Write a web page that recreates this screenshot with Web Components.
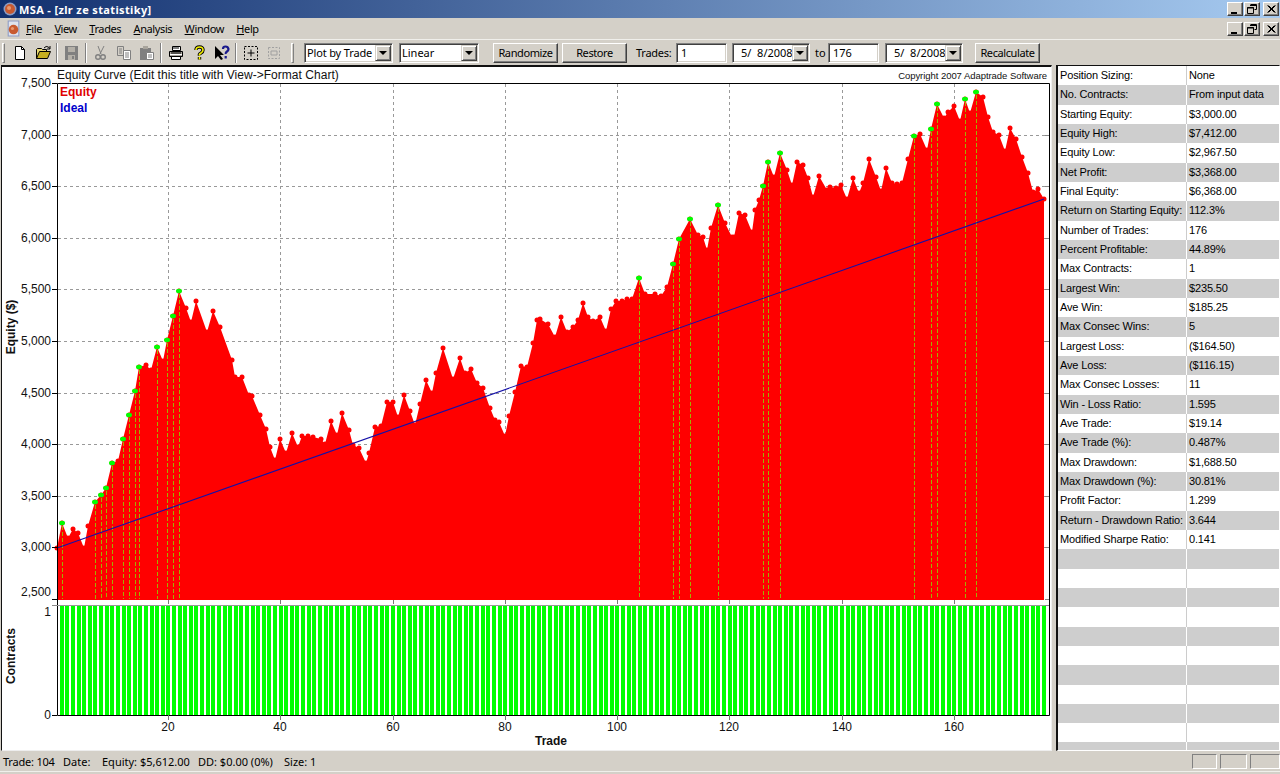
<!DOCTYPE html>
<html>
<head>
<meta charset="utf-8">
<title>MSA</title>
<style>
html,body{margin:0;padding:0}
body{width:1280px;height:774px;overflow:hidden;background:#d4d0c8;color:#000;font:11px "Noto Sans","Liberation Sans",sans-serif}
</style>
</head>
<body>
<win-titlebar>MSA - [zlr ze statistiky]</win-titlebar>
<win-menubar>
  <menu-item key="F" rest="ile"></menu-item>
  <menu-item key="V" rest="iew"></menu-item>
  <menu-item key="T" rest="rades"></menu-item>
  <menu-item key="A" rest="nalysis"></menu-item>
  <menu-item key="W" rest="indow"></menu-item>
  <menu-item key="H" rest="elp"></menu-item>
</win-menubar>
<win-toolbar>
  <tool-grip></tool-grip>
  <tool-btn icon="new" style="margin-left:3px"></tool-btn>
  <tool-btn icon="open"></tool-btn>
  <tool-sep></tool-sep>
  <tool-btn icon="save"></tool-btn>
  <tool-sep></tool-sep>
  <tool-btn icon="cut"></tool-btn>
  <tool-btn icon="copy"></tool-btn>
  <tool-btn icon="paste"></tool-btn>
  <tool-sep></tool-sep>
  <tool-btn icon="print"></tool-btn>
  <tool-btn icon="help"></tool-btn>
  <tool-btn icon="ctx"></tool-btn>
  <tool-sep></tool-sep>
  <tool-btn icon="group"></tool-btn>
  <tool-btn icon="ungroup"></tool-btn>
  <tool-grip style="margin-left:6px;margin-right:10px"></tool-grip>
  <combo-box style="width:89px;letter-spacing:-.15px">Plot by Trade</combo-box>
  <combo-box style="width:80px;margin-left:6px">Linear</combo-box>
  <push-button style="width:65px;margin-left:14px">Randomize</push-button>
  <push-button style="width:65px;margin-left:4px">Restore</push-button>
  <tool-label style="margin-left:9px;width:40px;letter-spacing:-.25px">Trades:</tool-label>
  <text-field style="width:51px">1</text-field>
  <combo-box date style="width:78px;margin-left:5px">5/&nbsp; 8/2008</combo-box>
  <tool-label style="margin-left:5px;width:13px">to</tool-label>
  <text-field style="width:51px">176</text-field>
  <combo-box date style="width:78px;margin-left:6px">5/&nbsp; 8/2008</combo-box>
  <push-button style="width:65px;margin-left:12px">Recalculate</push-button>
</win-toolbar>
<main-area>
  <equity-chart slot="chart"></equity-chart>
  <stats-table slot="stats">
    <stat-row><span slot="label">Position Sizing:</span>None</stat-row>
    <stat-row><span slot="label">No. Contracts:</span>From input data</stat-row>
    <stat-row><span slot="label">Starting Equity:</span>$3,000.00</stat-row>
    <stat-row><span slot="label">Equity High:</span>$7,412.00</stat-row>
    <stat-row><span slot="label">Equity Low:</span>$2,967.50</stat-row>
    <stat-row><span slot="label">Net Profit:</span>$3,368.00</stat-row>
    <stat-row><span slot="label">Final Equity:</span>$6,368.00</stat-row>
    <stat-row><span slot="label">Return on Starting Equity:</span>112.3%</stat-row>
    <stat-row><span slot="label">Number of Trades:</span>176</stat-row>
    <stat-row><span slot="label">Percent Profitable:</span>44.89%</stat-row>
    <stat-row><span slot="label">Max Contracts:</span>1</stat-row>
    <stat-row><span slot="label">Largest Win:</span>$235.50</stat-row>
    <stat-row><span slot="label">Ave Win:</span>$185.25</stat-row>
    <stat-row><span slot="label">Max Consec Wins:</span>5</stat-row>
    <stat-row><span slot="label">Largest Loss:</span>($164.50)</stat-row>
    <stat-row><span slot="label">Ave Loss:</span>($116.15)</stat-row>
    <stat-row><span slot="label">Max Consec Losses:</span>11</stat-row>
    <stat-row><span slot="label">Win - Loss Ratio:</span>1.595</stat-row>
    <stat-row><span slot="label">Ave Trade:</span>$19.14</stat-row>
    <stat-row><span slot="label">Ave Trade (%):</span>0.487%</stat-row>
    <stat-row><span slot="label">Max Drawdown:</span>$1,688.50</stat-row>
    <stat-row><span slot="label">Max Drawdown (%):</span>30.81%</stat-row>
    <stat-row><span slot="label">Profit Factor:</span>1.299</stat-row>
    <stat-row><span slot="label">Return - Drawdown Ratio:</span>3.644</stat-row>
    <stat-row><span slot="label">Modified Sharpe Ratio:</span>0.141</stat-row>
    <stat-row></stat-row><stat-row></stat-row><stat-row></stat-row><stat-row></stat-row>
    <stat-row></stat-row><stat-row></stat-row><stat-row></stat-row><stat-row></stat-row>
    <stat-row></stat-row><stat-row></stat-row><stat-row></stat-row>
  </stats-table>
</main-area>
<win-statusbar>
  <span style="width:60px;letter-spacing:-.2px">Trade: 104</span>
  <span style="width:39px">Date:</span>
  <span style="width:96px">Equity: $5,612.00</span>
  <span style="width:86px">DD: $0.00 (0%)</span>
  <span>Size: 1</span>
</win-statusbar>

<script>
const sphere=`<circle cx="8" cy="8" r="6.5" fill="#8d9cc4"/><circle cx="8" cy="8" r="5" fill="#c85a30"/><circle cx="7" cy="7" r="2" fill="#e89870"/>`;

const capTemplate = document.createElement('template');
capTemplate.innerHTML=`
<style>
  :host{display:flex;gap:0;align-items:center}
  b{display:block;width:14px;height:12px;margin-left:1px;background:#d4d0c8;border:1px solid;border-color:#fff #404040 #404040 #fff;box-shadow:inset -1px -1px 0 #808080;position:relative}
  b:last-child{margin-left:3px}
  svg{position:absolute;left:2px;top:1px}
</style>
<b><svg width="10" height="10"><path d="M1 8h6v2H1z" fill="#000"/></svg></b>
<b><svg width="10" height="10"><path d="M3.5 .5h6v5h-2M3 1.5h6" fill="none" stroke="#000"/><path d="M.5 3.5h6v6h-6z" fill="none" stroke="#000"/><path d="M0 4h7" stroke="#000"/></svg></b>
<b><svg width="10" height="10"><path d="M1.5 1.5l7 7M2.5 1.5l7 7M8.5 1.5l-7 7M9.5 1.5l-7 7" stroke="#000"/></svg></b>
`;
class CaptionButtons extends HTMLElement{
  constructor(){
    super();
    this.attachShadow({mode:'open'});
    this.shadowRoot.appendChild(capTemplate.content.cloneNode(true));
  }
}
customElements.define('caption-buttons',CaptionButtons);

const titleTemplate = document.createElement('template');
titleTemplate.innerHTML=`
<style>
  :host{display:flex;align-items:center;height:18px;padding:0 1px 0 2px;box-sizing:border-box;
    background:linear-gradient(90deg,#12306f 0%,#a6caf0 100%);color:#fff;font:bold 11px "Noto Sans","Liberation Sans",sans-serif}
  svg{flex:none;margin-right:1px}
  span{flex:1;white-space:nowrap;letter-spacing:.36px}
</style>
<svg width="16" height="16">${sphere}</svg>
<span><slot></slot></span>
<caption-buttons></caption-buttons>
`;
class WinTitlebar extends HTMLElement{
  constructor(){
    super();
    this.attachShadow({mode:'open'});
    this.shadowRoot.appendChild(titleTemplate.content.cloneNode(true));
  }
}
customElements.define('win-titlebar',WinTitlebar);

const menuItemTemplate = document.createElement('template');
menuItemTemplate.innerHTML=`
<style>
  :host{display:block;letter-spacing:-.4px}
  u{text-decoration:underline}
</style>
<u></u><span></span>
`;
class MenuItem extends HTMLElement{
  constructor(){
    super();
    this.attachShadow({mode:'open'});
    this.shadowRoot.appendChild(menuItemTemplate.content.cloneNode(true));
    this.shadowRoot.querySelector('u').textContent=this.getAttribute('key');
    this.shadowRoot.querySelector('span').textContent=this.getAttribute('rest');
  }
}
customElements.define('menu-item',MenuItem);

const menuTemplate = document.createElement('template');
menuTemplate.innerHTML=`
<style>
  :host{display:flex;align-items:center;height:22px;box-sizing:border-box;border-bottom:1px solid #f0efeb;position:relative}
  .doc{flex:none;margin:0 4px 0 5px}
  .items{flex:1;display:flex;gap:12.4px;font-size:11px}
  caption-buttons{margin-right:1px}
</style>
<svg class="doc" width="17" height="17" viewBox="0 0 16 16"><path d="M3 1h10v14H3z" fill="#dfe3ee" stroke="#8d9cc4"/><circle cx="8" cy="9" r="4.5" fill="#c85a30"/><circle cx="7" cy="8" r="1.5" fill="#e89870"/></svg>
<div class="items"><slot></slot></div>
<caption-buttons></caption-buttons>
`;
class WinMenubar extends HTMLElement{
  constructor(){
    super();
    this.attachShadow({mode:'open'});
    this.shadowRoot.appendChild(menuTemplate.content.cloneNode(true));
  }
}
customElements.define('win-menubar',WinMenubar);

const toolbarTemplate = document.createElement('template');
toolbarTemplate.innerHTML=`
<style>
  :host{display:flex;align-items:center;height:25px;padding-left:2px;box-sizing:border-box}
</style>
<slot></slot>
`;
class WinToolbar extends HTMLElement{
  constructor(){
    super();
    this.attachShadow({mode:'open'});
    this.shadowRoot.appendChild(toolbarTemplate.content.cloneNode(true));
  }
}
customElements.define('win-toolbar',WinToolbar);

class ToolGrip extends HTMLElement{
  constructor(){
    super();
    this.attachShadow({mode:'open'});
    this.shadowRoot.innerHTML=`<style>:host{display:block;flex:none;width:3px;height:20px;border:1px solid;border-color:#fff #808080 #808080 #fff;box-sizing:border-box}</style>`;
  }
}
customElements.define('tool-grip',ToolGrip);

class ToolSep extends HTMLElement{
  constructor(){
    super();
    this.attachShadow({mode:'open'});
    this.shadowRoot.innerHTML=`<style>:host{display:block;flex:none;width:6px;height:20px;box-sizing:border-box}div{width:2px;height:20px;margin-left:2px;border-left:1px solid #808080;border-right:1px solid #fff;box-sizing:border-box}</style><div></div>`;
  }
}
customElements.define('tool-sep',ToolSep);

const icons={
  new:`<path d="M3.5 1.5h6l3 3v10h-9z" fill="#fff" stroke="#000"/><path d="M9.5 1.5v3h3" fill="none" stroke="#000"/>`,
  open:`<path d="M1.5 13.5v-9l1-1h4l1 1h4v2" fill="#e8d870" stroke="#000"/><path d="M1.5 13.5l3-7h11l-3 7z" fill="#c8b020" stroke="#000"/><path d="M9 3q2-2.500 4.500-1l1 1.500M15 1v3h-3" fill="none" stroke="#000"/>`,
  save:`<path d="M1 1h13v14H1z" fill="#808080"/><path d="M4 2h7v5H4z" fill="#b4b0a8"/><path d="M4 10h7v5H4z" fill="#b4b0a8"/><path d="M8 11h2v3H8z" fill="#808080"/>`,
  cut:`<path d="M5 1l3 8M11 1L7 9" stroke="#808080" fill="none"/><circle cx="5" cy="12" r="2.300" fill="none" stroke="#808080" stroke-width="1.400"/><circle cx="10" cy="12" r="2.300" fill="none" stroke="#808080" stroke-width="1.400"/>`,
  copy:`<path d="M1.500 1.500h6v9h-6z" fill="#d4d0c8" stroke="#808080"/><path d="M7.500 5.500h7v9h-7z" fill="#fff" stroke="#808080"/><path d="M3 4h3M3 6h3M3 8h3M9 8h4M9 10h4M9 12h4" stroke="#808080"/>`,
  paste:`<path d="M1 3h11v12H1z" fill="#808080"/><path d="M4 1h5v3H4z" fill="#a8a49c"/><path d="M7.500 7.500h7v7h-7z" fill="#fff" stroke="#808080"/><path d="M9 10h4M9 12h4" stroke="#808080"/>`,
  print:`<path d="M4.500 1.500h8v4h-8z" fill="#fff" stroke="#000"/><path d="M1.500 6.500h13v5h-13z" fill="#a8a49c" stroke="#000"/><path d="M3.500 11.500h9v3h-9z" fill="#fff" stroke="#000"/><path d="M3 8h10M5 3h6" stroke="#000"/><path d="M2 9.500h12" stroke="#fff"/>`,
  help:`<path d="M5 5q0-3 3.500-3T12 5q0 2-2 3t-1.500 2.500M8.500 12v2.500" fill="none" stroke="#000" stroke-width="3.400"/><path d="M5 5q0-3 3.500-3T12 5q0 2-2 3t-1.500 2.500M8.500 12v2.500" fill="none" stroke="#f4f000" stroke-width="1.600"/>`,
  ctx:`<path d="M1 1v13l3-3 3 4 2-1-3-4h4z" fill="#000"/><path d="M9 4q0-2.500 2.500-2.500T14.500 4q0 1.500-1.500 2.500t-1.300 2.500M11.700 11v2.500" fill="none" stroke="#1a1a8c" stroke-width="2.200"/>`,
  group:`<path d="M1.500 1.500h13v13h-13z" fill="none" stroke="#000" stroke-dasharray="2 1.500"/><path d="M8 4.500v7M4.500 8h7" stroke="#000"/>`,
  ungroup:`<path d="M2.500 2.500h11v11h-11z" fill="none" stroke="#a0a0a0" stroke-dasharray="2 1.500"/><path d="M5 6h6v4H5z" fill="none" stroke="#a0a0a0"/>`
};
class ToolBtn extends HTMLElement{
  constructor(){
    super();
    this.attachShadow({mode:'open'});
    this.shadowRoot.innerHTML=`<style>:host{display:flex;flex:none;width:23px;height:20px;align-items:center;justify-content:center}</style><svg width="16" height="16" viewBox="0 0 16 16">${icons[this.getAttribute('icon')]}</svg>`;
  }
}
customElements.define('tool-btn',ToolBtn);

const comboTemplate = document.createElement('template');
comboTemplate.innerHTML=`
<style>
  :host{display:flex;flex:none;height:20px;box-sizing:border-box;background:#fff;border:1px solid;border-color:#808080 #fff #fff #808080;box-shadow:inset 1px 1px 0 #404040,inset -1px -1px 0 #d4d0c8}
  .t{flex:1;padding-left:2px;line-height:18px;white-space:nowrap;overflow:hidden}
  :host([date]) .t{padding-left:8px}
  .a{flex:none;width:16px;height:16px;margin:1px 1px 1px 0;box-sizing:border-box;background:#d4d0c8;border:1px solid;border-color:#d4d0c8 #404040 #404040 #d4d0c8;box-shadow:inset 1px 1px 0 #fff,inset -1px -1px 0 #808080;display:flex;align-items:center;justify-content:center}
  i{display:block;width:0;height:0;border:4px solid transparent;border-top:4px solid #000;border-bottom:0}
</style>
<div class="t"><slot></slot></div>
<div class="a"><i></i></div>
`;
class ComboBox extends HTMLElement{
  constructor(){
    super();
    this.attachShadow({mode:'open'});
    this.shadowRoot.appendChild(comboTemplate.content.cloneNode(true));
  }
}
customElements.define('combo-box',ComboBox);

const pushTemplate = document.createElement('template');
pushTemplate.innerHTML=`
<style>
  :host{display:flex;flex:none;height:20px;box-sizing:border-box;align-items:center;justify-content:center;background:#d4d0c8;border:1px solid;border-color:#fff #404040 #404040 #fff;box-shadow:inset -1px -1px 0 #808080;white-space:nowrap;letter-spacing:-.4px}
</style>
<slot></slot>
`;
class PushButton extends HTMLElement{
  constructor(){
    super();
    this.attachShadow({mode:'open'});
    this.shadowRoot.appendChild(pushTemplate.content.cloneNode(true));
  }
}
customElements.define('push-button',PushButton);

class ToolLabel extends HTMLElement{
  constructor(){
    super();
    this.attachShadow({mode:'open'});
    this.shadowRoot.innerHTML=`<style>:host{display:block;flex:none;white-space:nowrap}</style><slot></slot>`;
  }
}
customElements.define('tool-label',ToolLabel);

class TextField extends HTMLElement{
  constructor(){
    super();
    this.attachShadow({mode:'open'});
    this.shadowRoot.innerHTML=`<style>:host{display:block;flex:none;height:20px;box-sizing:border-box;padding-left:4px;line-height:18px;background:#fff;border:1px solid;border-color:#808080 #fff #fff #808080;box-shadow:inset 1px 1px 0 #404040,inset -1px -1px 0 #d4d0c8}</style><slot></slot>`;
  }
}
customElements.define('text-field',TextField);

const mainTemplate = document.createElement('template');
mainTemplate.innerHTML=`
<style>
  :host{display:flex;height:686px;justify-content:space-between}
</style>
<slot name="chart"></slot>
<slot name="stats"></slot>
`;
class MainArea extends HTMLElement{
  constructor(){
    super();
    this.attachShadow({mode:'open'});
    this.shadowRoot.appendChild(mainTemplate.content.cloneNode(true));
  }
}
customElements.define('main-area',MainArea);

// curve traced off the reference, page pixels
const curve=[[57,548],[62,523],[68,538],[73,529],[78,533],[84,548],[88,526],[95,502],[101,495],[106,488],[112,463],[118,461],[123,439],[129,415],[135,391],[139,367],[146,365],[151,370],[157,347],[163,361],[167,340],[173,316],[179,291],[186,308],[191,322],[196,301],[207,332],[213,311],[220,327],[232,360],[235,377],[242,377],[249,395],[252,396],[260,415],[266,429],[270,447],[275,460],[280,439],[286,453],[292,433],[298,447],[302,436],[308,436],[313,437],[321,439],[325,444],[331,421],[337,435],[342,413],[349,430],[353,445],[359,448],[366,463],[369,453],[375,427],[381,426],[387,402],[393,402],[398,417],[404,395],[410,411],[415,425],[420,404],[426,380],[432,393],[436,373],[443,348],[453,379],[460,358],[465,373],[471,369],[477,383],[483,388],[490,408],[495,420],[499,422],[505,436],[509,416],[515,392],[521,366],[527,367],[533,343],[537,320],[540,319],[548,324],[555,337],[561,317],[567,332],[573,327],[578,320],[583,303],[588,317],[593,321],[600,317],[606,331],[611,309],[616,301],[622,301],[627,299],[632,299],[639,278],[645,294],[655,294],[661,296],[667,287],[673,264],[679,239],[690,219],[698,235],[703,237],[707,250],[711,228],[718,205],[725,223],[732,237],[734,237],[739,213],[745,215],[752,232],[755,210],[759,200],[763,186],[768,162],[774,177],[780,153],[787,170],[792,185],[797,162],[803,165],[808,178],[813,197],[819,176],[827,190],[830,187],[836,188],[841,185],[847,199],[853,178],[859,193],[863,183],[869,159],[876,177],[881,191],[886,168],[892,183],[897,184],[902,183],[908,159],[914,136],[920,134],[927,150],[931,129],[937,104],[944,118],[948,112],[954,106],[960,121],[965,99],[970,113],[976,92],[983,97],[988,117],[993,132],[999,135],[1005,151],[1010,128],[1016,139],[1022,157],[1028,173],[1033,192],[1038,189],[1044,199]];
const highs=[[62,523],[95,502],[101,495],[106,488],[112,463],[123,439],[129,415],[135,391],[139,367],[157,347],[167,340],[173,316],[179,291],[639,278],[673,264],[679,239],[690,219],[718,205],[763,186],[768,162],[780,153],[914,136],[931,129],[937,104],[965,99],[976,92]];

function chartSvg(){
  const tx=n=>168+(n-20)*5.6125;
  const vy=v=>83+(7500-v)*0.1032;
  let s='';
  // grid
  for(let v=7000;v>=3000;v-=500) s+=`<path d="M58 ${Math.round(vy(v))+.5}H1048" stroke="#999" stroke-dasharray="3 3"/>`;
  for(let n=20;n<=160;n+=20) s+=`<path d="M${Math.round(tx(n))+.5} 84V600" stroke="#999" stroke-dasharray="3 3"/>`;
  // equity fill
  const pts=curve.map(p=>p.join(',')).join(' ');
  s+=`<polygon points="57,600 ${pts} 1044,600" fill="#ff0000"/>`;
  s+=curve.map(p=>`<circle cx="${p[0]}" cy="${p[1]}" r="2.500" fill="#ff0000"/>`).join('');
  // new equity highs
  s+=highs.map(p=>`<path d="M${p[0]+.5} ${p[1]+3}V599" stroke="#a0b000" stroke-dasharray="4 2"/>`).join('');
  s+=highs.map(p=>`<ellipse cx="${p[0]}" cy="${p[1]}" rx="3" ry="2.300" fill="#00ff00"/>`).join('');
  // ideal line
  s+=`<path d="M57 548L1044 199" stroke="#1410a8" stroke-width="1.100" fill="none"/>`;
  // contracts bars
  for(let n=1;n<=176;n++) s+=`<rect x="${Math.round(tx(n)-1.6)}" y="605" width="4" height="110" fill="#00ff00"/>`;
  // frame and ticks
  s+=`<path d="M57.500 83.500H1049.500V715.500H57.500Z" fill="none" stroke="#000"/>`;
  s+=`<path d="M52 605.500H1049" stroke="#999"/><path d="M52 715.500H57M52 599.500H57" stroke="#000"/>`;
  s+=`<rect x="1045" y="600" width="4" height="5" fill="#fff"/><rect x="58" y="600" width="987" height="5" fill="#fff"/>`;
  s+=`<path d="M52 605.500H57M1045 599.500H1049M1045 605.500H1049" stroke="#888"/>`;
  let labels='';
  for(let v=7500;v>=2500;v-=500){
    const y=vy(v);
    s+=`<path d="M52 ${Math.round(y)+.5}H57" stroke="#000"/>`;
    if(v<7500&&v>2500) s+=`<path d="M1045 ${Math.round(y)+.5}H1049" stroke="#888"/>`;
    const ly=v==2500?596:y+4;
    labels+=`<text x="51" y="${ly}" text-anchor="end">${String(v).replace(/(\d)(\d{3})$/,'$1,$2')}</text>`;
  }
  labels+=`<text x="51" y="616" text-anchor="end">1</text><text x="51" y="719" text-anchor="end">0</text>`;
  for(let n=20;n<=160;n+=20){
    const x=Math.round(tx(n));
    s+=`<path d="M${x+.5} 715V720M${x+.5} 600V604" stroke="#777"/>`;
    labels+=`<text x="${x}" y="731" text-anchor="middle">${n}</text>`;
  }
  labels+=`<text x="57" y="79" class="title">Equity Curve (Edit this title with View-&gt;Format Chart)</text>`;
  labels+=`<text x="1047" y="79" text-anchor="end" class="copy">Copyright 2007 Adaptrade Software</text>`;
  labels+=`<text x="60" y="96" class="b" fill="#e00000">Equity</text><text x="60" y="112" class="b" fill="#0000cc">Ideal</text>`;
  labels+=`<text x="551" y="745" text-anchor="middle" class="b">Trade</text>`;
  labels+=`<text transform="translate(15,327) rotate(-90)" text-anchor="middle" class="b">Equity ($)</text>`;
  labels+=`<text transform="translate(15,656) rotate(-90)" text-anchor="middle" class="b">Contracts</text>`;
  return `<svg width="1049" height="683" viewBox="2 67 1049 683">${s}${labels}</svg>`;
}

class EquityChart extends HTMLElement{
  constructor(){
    super();
    this.attachShadow({mode:'open'});
    this.shadowRoot.innerHTML=`
<style>
  :host{display:block;flex:none;width:1051px;height:686px;margin-left:1px;box-sizing:border-box;background:#fff;
    border-left:1px solid #111;border-top:2px solid #111;border-right:1px solid #eee;border-bottom:1px solid #eee}
  svg{display:block}
  text{font:12px "Liberation Sans",Arial,sans-serif;fill:#111}
  text.title{letter-spacing:.03px}
  text.copy{font-size:9.500px;letter-spacing:-.05px}
  text.b{font-weight:bold}
  text.b[fill="#e00000"]{fill:#e00000}
  text.b[fill="#0000cc"]{fill:#0000cc}
</style>${chartSvg()}`;
  }
}
customElements.define('equity-chart',EquityChart);

const statsTemplate = document.createElement('template');
statsTemplate.innerHTML=`
<style>
  :host{display:grid;flex:none;width:224px;height:686px;box-sizing:border-box;grid-auto-rows:19.33px;overflow:hidden;background:#fff;
    border-left:2px solid #111;border-top:1px solid #111;border-right:1px solid #fff;border-bottom:1px solid #fff;font:11px "Liberation Sans",Arial,sans-serif;letter-spacing:-.15px}
</style>
<slot></slot>
`;
class StatsTable extends HTMLElement{
  constructor(){
    super();
    this.attachShadow({mode:'open'});
    this.shadowRoot.appendChild(statsTemplate.content.cloneNode(true));
  }
}
customElements.define('stats-table',StatsTable);

const rowTemplate = document.createElement('template');
rowTemplate.innerHTML=`
<style>
  :host{display:grid;grid-template-columns:129px 1fr;background:#fff;white-space:nowrap;line-height:19px}
  :host(.alt){background:#cecece}
  .l{padding-left:2px;border-right:1px solid #ccc;overflow:hidden}
  :host(.alt) .l{border-right-color:#fff}
  .v{padding-left:2px}
</style>
<div class="l"><slot name="label"></slot></div>
<div class="v"><slot></slot></div>
`;
class StatRow extends HTMLElement{
  constructor(){
    super();
    this.attachShadow({mode:'open'});
    this.shadowRoot.appendChild(rowTemplate.content.cloneNode(true));
  }
  connectedCallback(){
    if([...this.parentNode.children].indexOf(this)%2) this.classList.add('alt');
  }
}
customElements.define('stat-row',StatRow);

const statusTemplate = document.createElement('template');
statusTemplate.innerHTML=`
<style>
  :host{display:flex;align-items:flex-start;height:23px;box-sizing:border-box;padding:3px 0 0 3px;white-space:nowrap;position:relative}
  .items{flex:1;display:flex;line-height:15px}
  ::slotted(span){display:block}
  .p{flex:none;height:15px;box-sizing:border-box;border:1px solid;border-color:#808080 #fff #fff #808080;margin-left:3px}
  .line{position:absolute;left:0;right:0;bottom:2px;height:1px;background:#f0efeb}
</style>
<div class="items"><slot></slot></div>
<div class="p" style="width:25px"></div>
<div class="p" style="width:27px"></div>
<div class="p" style="width:30px"></div>
<div class="line"></div>
`;
class WinStatusbar extends HTMLElement{
  constructor(){
    super();
    this.attachShadow({mode:'open'});
    this.shadowRoot.appendChild(statusTemplate.content.cloneNode(true));
  }
}
customElements.define('win-statusbar',WinStatusbar);
</script>
</body>
</html>
